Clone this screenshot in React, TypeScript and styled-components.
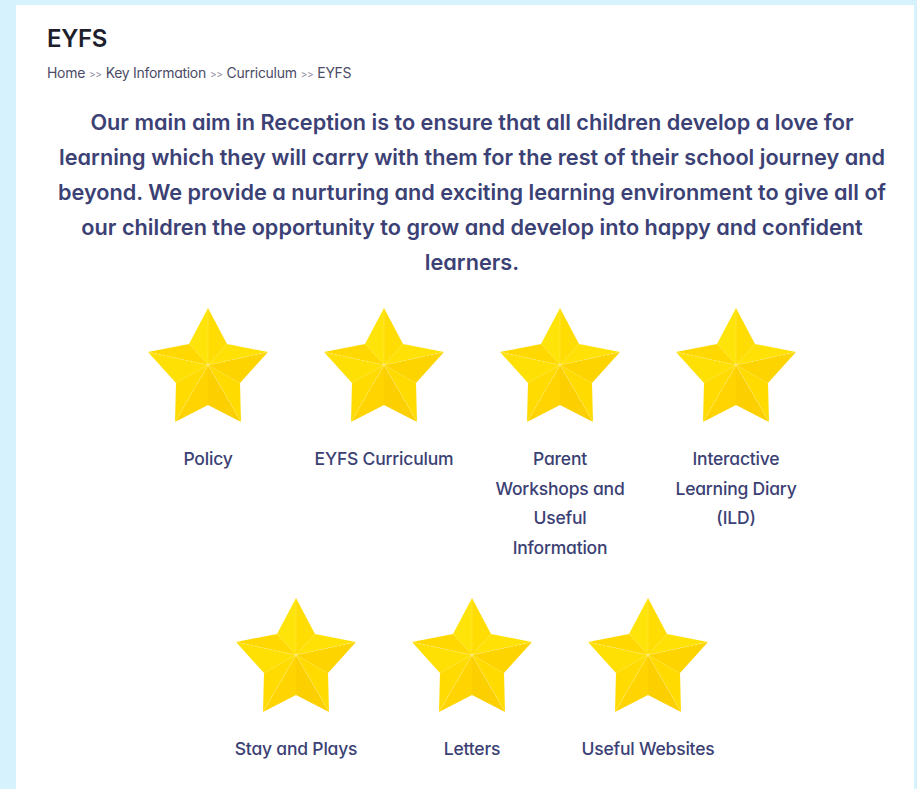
import React from "react";
import styled, { createGlobalStyle } from "styled-components";

const GlobalStyle = createGlobalStyle`
  html, body {
    margin: 0;
    padding: 0;
    background: #d5f2fd;
  }
  body {
    font-family: Inter, "Noto Sans", sans-serif;
    font-feature-settings: "cv11";
  }
`;

const Page = styled.div`
  min-height: 789px;
  padding: 5px 3px 0 16px;
  box-sizing: border-box;
`;

const Panel = styled.main`
  background: #ffffff;
  min-height: 784px;
  padding: 18px 17px 0 31px;
  box-sizing: border-box;
`;

const Title = styled.h1`
  margin: 0;
  font-size: 24px;
  line-height: 32px;
  font-weight: 600;
  color: #1e1e2c;
  letter-spacing: -0.3px;
`;

const Crumbs = styled.nav`
  margin-top: 10px;
  font-size: 14px;
  line-height: 16px;
  color: #4c4c66;
  letter-spacing: -0.3px;
`;

const Sep = styled.span`
  font-size: 10px;
  color: #8a8aa0;
  margin: 0 4px;
`;

const Intro = styled.p`
  margin: 23px auto 0;
  max-width: 850px;
  text-align: center;
  font-size: 21.7px;
  line-height: 35px;
  font-weight: 600;
  color: #3b4174;
`;

const Grid = styled.div`
  width: 704px;
  margin: 27px auto 0;
  display: flex;
  flex-wrap: wrap;
  justify-content: center;
  row-gap: 35px;
`;

const Tile = styled.a`
  width: 176px;
  display: flex;
  flex-direction: column;
  align-items: center;
  text-decoration: none;
`;

const Label = styled.span`
  margin-top: 21px;
  max-width: 146px;
  text-align: center;
  font-size: 17.5px;
  line-height: 29.5px;
  font-weight: 500;
  color: #3b4174;
  letter-spacing: -0.2px;
`;

type P = [number, number];

// Faceted five-point star: each arm is split into a lit and a shaded half,
// with faint dashed ridges running from the apex to the tips.
const tips: P[] = [
  [61, 1],
  [121, 45],
  [94, 115],
  [28, 115],
  [1, 45],
];
const notches: P[] = [
  [80, 37],
  [93, 76],
  [61, 98],
  [29, 76],
  [42, 37],
];
const apex: P = [61, 58];
const lit = ["#ffe40a", "#ffe105", "#ffdb00", "#ffd400", "#ffe004"];
const shade = ["#ffdd02", "#fdd400", "#fcd000", "#ffdb02", "#ffd800"];

const fmt = (p: P) => `${p[0]},${p[1]}`;

const StarIcon: React.FC = () => (
  <svg width="122" height="116" viewBox="0 0 122 116" aria-hidden="true">
    {tips.map((t, i) => {
      const before = notches[(i + 4) % 5];
      const after = notches[i];
      return (
        <g key={i}>
          <polygon points={`${fmt(apex)} ${fmt(before)} ${fmt(t)}`} fill={lit[i]} />
          <polygon points={`${fmt(apex)} ${fmt(t)} ${fmt(after)}`} fill={shade[i]} />
        </g>
      );
    })}
    {tips.map((t, i) => (
      <line
        key={i}
        x1={apex[0]}
        y1={apex[1]}
        x2={t[0]}
        y2={t[1]}
        stroke="#fff3a0"
        strokeWidth="0.7"
        strokeDasharray="2 2"
        opacity="0.7"
      />
    ))}
  </svg>
);

const links = [
  "Policy",
  "EYFS Curriculum",
  "Parent Workshops and Useful Information",
  "Interactive Learning Diary (ILD)",
  "Stay and Plays",
  "Letters",
  "Useful Websites",
];

export default function App() {
  return (
    <>
      <GlobalStyle />
      <Page>
        <Panel>
          <Title>EYFS</Title>
          <Crumbs>
            Home<Sep>&gt;&gt;</Sep>Key Information<Sep>&gt;&gt;</Sep>Curriculum
            <Sep>&gt;&gt;</Sep>EYFS
          </Crumbs>
          <Intro>
            Our main aim in Reception is to ensure that all children develop a love for
            learning which they will carry with them for the rest of their school journey
            and beyond. We provide a nurturing and exciting learning environment to give
            all of our children the opportunity to grow and develop into happy and
            confident learners.
          </Intro>
          <Grid>
            {links.map((t) => (
              <Tile key={t} href="#">
                <StarIcon />
                <Label>{t}</Label>
              </Tile>
            ))}
          </Grid>
        </Panel>
      </Page>
    </>
  );
}
